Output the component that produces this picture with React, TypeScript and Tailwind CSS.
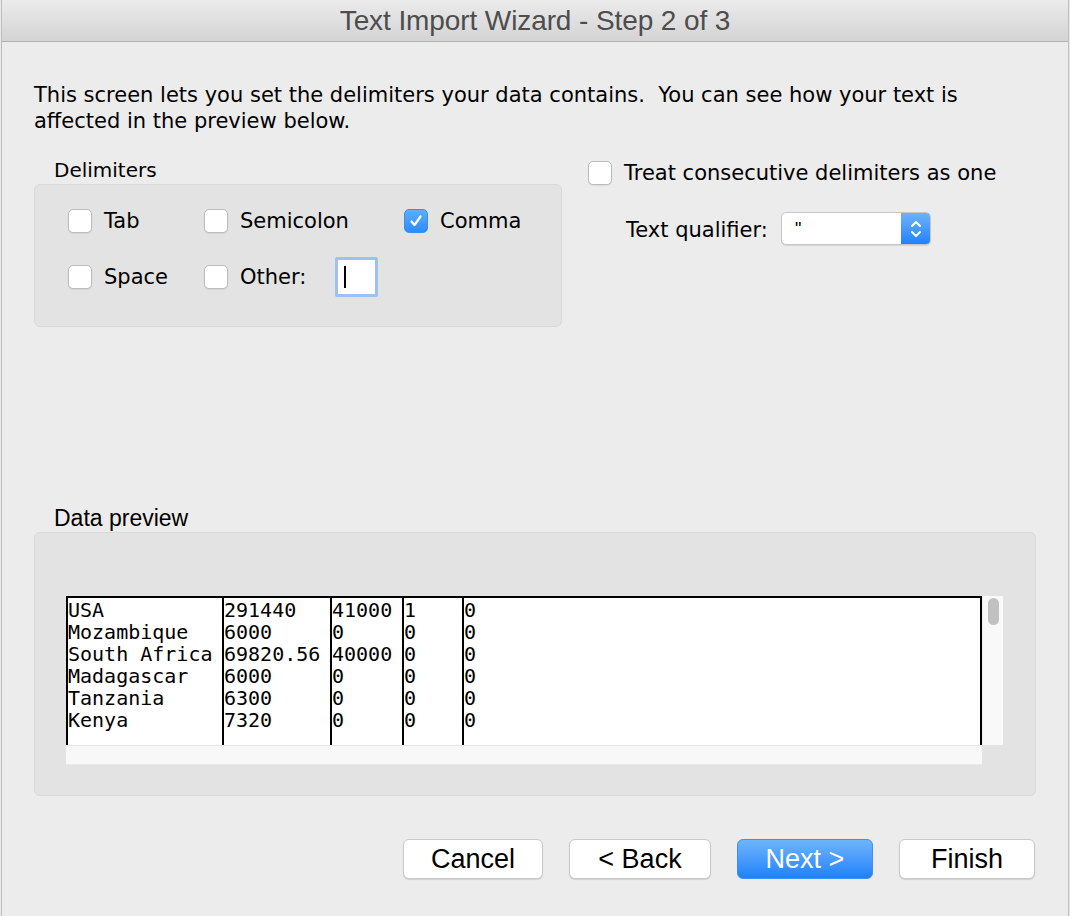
import React from "react";

const LUCIDA = '"DejaVu Sans", "Noto Sans", sans-serif';
const HELV = '"Liberation Sans", Arial, sans-serif';
const MONO = '"DejaVu Sans Mono", "Liberation Mono", monospace';

function Checkbox({ checked = false }: { checked?: boolean }) {
  if (checked) {
    return (
      <div className="w-[24px] h-[24px] rounded-[5px] bg-gradient-to-b from-[#5eadfb] to-[#2a8cfb] border border-[#3a8ff0] flex items-center justify-center shrink-0">
        <svg width="14" height="14" viewBox="0 0 14 14">
          <path d="M2.5 7.5 L5.5 11 L11.5 2.5" fill="none" stroke="white" strokeWidth="2.2" strokeLinecap="round" strokeLinejoin="round" />
        </svg>
      </div>
    );
  }
  return (
    <div className="w-[24px] h-[24px] rounded-[5px] bg-white border border-[#bcbcbc] shadow-[0_1px_1px_rgba(0,0,0,0.08)] shrink-0" />
  );
}

function Option({ label, checked, width }: { label: string; checked?: boolean; width: string }) {
  return (
    <div className={`flex items-center ${width}`}>
      <Checkbox checked={checked} />
      <span className="ml-[12px] text-[21px] text-black leading-none pt-[1px]">{label}</span>
    </div>
  );
}

const rows = [
  ["USA", "291440", "41000", "1", "0"],
  ["Mozambique", "6000", "0", "0", "0"],
  ["South Africa", "69820.56", "40000", "0", "0"],
  ["Madagascar", "6000", "0", "0", "0"],
  ["Tanzania", "6300", "0", "0", "0"],
  ["Kenya", "7320", "0", "0", "0"],
];

const colWidths = ["w-[156px]", "w-[108px]", "w-[72px]", "w-[60px]", "w-[518px]"];

function Button({ label, primary = false, width }: { label: string; primary?: boolean; width: string }) {
  return (
    <div
      className={`${width} h-[40px] rounded-[6px] flex items-center justify-center text-[27px] leading-none ${
        primary
          ? "bg-gradient-to-b from-[#6eb4fb] to-[#1b81fb] text-white border border-[#3d8ff3]"
          : "bg-white text-black border border-[#c9c9c9] shadow-[0_1px_1px_rgba(0,0,0,0.12)]"
      }`}
      style={{ fontFamily: HELV }}
    >
      {label}
    </div>
  );
}

export default function App() {
  return (
    <div className="w-[1070px] h-[916px] bg-[#e9e9e9] overflow-hidden">
      <div className="w-[1068px] h-[916px] ml-[1px] bg-[#ececec] border-x border-[#bdbdbd] flex flex-col" style={{ fontFamily: LUCIDA }}>
        {/* Title bar */}
        <div
          className="h-[42px] shrink-0 bg-gradient-to-b from-[#ebebeb] to-[#d4d4d4] border-b border-[#b3b3b3] flex items-center justify-center text-[28px] text-[#4d4d4d] leading-none"
          style={{ fontFamily: HELV }}
        >
          <span className="tracking-[-0.1px]">Text Import Wizard - Step 2 of 3</span>
        </div>

        <div className="pl-[32px] pt-[40px] flex flex-col">
          <p className="text-[21px] leading-[26px] text-black whitespace-nowrap">
            This screen lets you set the delimiters your data contains.&nbsp; You can see how your text is
            <br />
            affected in the preview below.
          </p>

          <div className="flex mt-[24px]">
            {/* Delimiters */}
            <div className="flex flex-col w-[554px]">
              <div className="pl-[20px] text-[20px] leading-[24px] h-[24px] text-black">Delimiters</div>
              <div className="mt-[2px] w-[528px] h-[143px] rounded-[6px] bg-[#e3e3e3] border border-[#d9d9d9] pl-[33px] pt-[24px] flex flex-col">
                <div className="flex items-center h-[24px]">
                  <Option label="Tab" width="w-[136px]" />
                  <Option label="Semicolon" width="w-[200px]" />
                  <Option label="Comma" checked width="w-[150px]" />
                </div>
                <div className="flex items-center h-[24px] mt-[32px]">
                  <Option label="Space" width="w-[136px]" />
                  <Option label="Other:" width="w-[131px]" />
                  <div className="w-[43px] h-[40px] rounded-[2px] bg-[#9cc3f0] p-[3px]">
                    <div className="w-full h-full bg-white flex items-center pl-[6px]">
                      <div className="w-[2px] h-[22px] bg-black" />
                    </div>
                  </div>
                </div>
              </div>
            </div>

            {/* Right options */}
            <div className="flex flex-col">
              <div className="flex items-center mt-[3px]">
                <Checkbox />
                <span className="ml-[12px] text-[21px] leading-none text-black pt-[1px]">Treat consecutive delimiters as one</span>
              </div>
              <div className="flex items-center mt-[27px] ml-[38px]">
                <span className="text-[21px] leading-none text-black w-[155px] pt-[3px]">Text qualifier:</span>
                <div className="w-[150px] h-[33px] rounded-[5px] bg-white border border-[#c6c6c6] shadow-[0_1px_1px_rgba(0,0,0,0.1)] flex overflow-hidden">
                  <div className="flex-1 pl-[13px] flex items-center text-[18px] leading-none text-black" style={{ fontFamily: HELV }}>
                    "
                  </div>
                  <div className="w-[29px] h-full bg-gradient-to-b from-[#6cb2fa] to-[#1c82fb] flex items-center justify-center">
                    <svg width="14" height="22" viewBox="0 0 14 22">
                      <path d="M3 8 L7 4 L11 8" fill="none" stroke="white" strokeWidth="2" strokeLinecap="round" strokeLinejoin="round" />
                      <path d="M3 14 L7 18 L11 14" fill="none" stroke="white" strokeWidth="2" strokeLinecap="round" strokeLinejoin="round" />
                    </svg>
                  </div>
                </div>
              </div>
            </div>
          </div>

          {/* Data preview */}
          <div className="mt-[179px] pl-[20px] text-[23px] leading-[24px] h-[24px] text-black" style={{ fontFamily: HELV }}>
            Data preview
          </div>
          <div className="mt-[2px] w-[1002px] h-[264px] rounded-[6px] bg-[#e3e3e3] border border-[#d9d9d9] pl-[31px] pt-[63px]">
            <div className="grid grid-cols-[916px_21px] grid-rows-[149px_20px]">
              <div className="bg-white border-l-2 border-t-2 border-black flex overflow-hidden">
                {colWidths.map((w, ci) => (
                  <div key={ci} className={`${w} shrink-0 h-full border-r-2 border-black flex flex-col pt-[1px]`}>
                    {rows.map((r, ri) => (
                      <div
                        key={ri}
                        className="h-[22px] text-[20px] leading-[22px] text-black whitespace-pre"
                        style={{ fontFamily: MONO }}
                      >
                        {r[ci]}
                      </div>
                    ))}
                  </div>
                ))}
              </div>
              <div className="bg-[#f9f9f9] border-l border-[#ebebeb] flex justify-center pt-[2px]">
                <div className="w-[11px] h-[27px] rounded-full bg-[#c1c1c1]" />
              </div>
              <div className="bg-[#f8f8f8] border-t border-[#e6e6e6] border-b border-b-[#e9e9e9]" />
              <div />
            </div>
          </div>

          {/* Buttons */}
          <div className="mt-[43px] flex pl-[369px] gap-[26px]">
            <Button label="Cancel" width="w-[140px]" />
            <Button label="< Back" width="w-[142px]" />
            <Button label="Next >" primary width="w-[136px]" />
            <Button label="Finish" width="w-[136px]" />
          </div>
        </div>
      </div>
    </div>
  );
}
